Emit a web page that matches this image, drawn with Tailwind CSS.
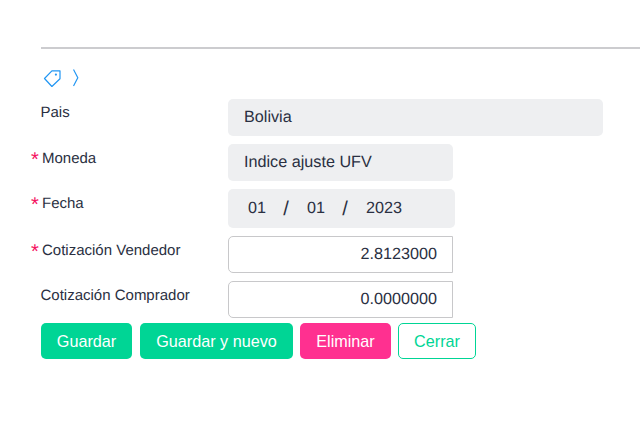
<!DOCTYPE html>
<html lang="es"><head><meta charset="utf-8"><script src="https://cdn.jsdelivr.net/npm/@tailwindcss/browser@4"></script></head>
<body class="bg-white font-['Liberation_Sans',sans-serif] text-[#2a3042] overflow-hidden [text-rendering:geometricPrecision]">
<div class="w-[640px] h-[435px] pl-[41px] pt-[47px]">
  <div class="h-[2px] bg-[#cccccf]"></div>
  <div class="h-[50px] pt-[20px] pl-[2px] flex items-start gap-[11.5px]">
    <svg width="18" height="18" viewBox="0 0 18 18" fill="none" stroke="#2196f3" stroke-width="1.2"><path d="M1.5 10 L8.9 2.3 L17 2.3 L17 10.3 L8.9 18 Z" stroke-linejoin="round" transform="translate(0 -0.5)"/><circle cx="12.9" cy="5.6" r="1.1" fill="#2196f3" stroke="none"/></svg>
    <svg width="6" height="18" viewBox="0 0 6 18" fill="none" stroke="#2196f3" stroke-width="1.2"><path d="M0.5 0.5 L4.8 8.7 L0.5 17"/></svg>
  </div>
  <div class="flex flex-col gap-[8px] w-[562px] text-[16.2px]">
    <div class="flex h-[37px]">
      <label class="w-[187px] shrink-0 text-[15px] leading-[17px] pt-[5px] -ml-[0.5px] mr-[0.5px]">Pais</label>
      <div class="w-[375px] h-[37px] bg-[#eeeff1] rounded-[5px] flex items-center px-[16px]">Bolivia</div>
    </div>
    <div class="flex h-[37px]">
      <label class="w-[197px] shrink-0 -ml-[10px] text-[15px] leading-[17px] pt-[6px] flex"><span class="text-[#f5145f] w-[11px] text-[20px] leading-[20px]">*</span>Moneda</label>
      <div class="w-[225px] h-[37px] bg-[#eeeff1] rounded-[5px] flex items-center px-[16px]">Indice ajuste UFV</div>
    </div>
    <div class="flex h-[39px]">
      <label class="w-[197px] shrink-0 -ml-[10px] text-[15px] leading-[17px] pt-[6px] flex"><span class="text-[#f5145f] w-[11px] text-[20px] leading-[20px]">*</span>Fecha</label>
      <div class="w-[227px] h-[39px] bg-[#eeeff1] rounded-[5px] flex items-center pl-[20px]">
        <span class="w-[18px]">01</span><span class="w-[41px] text-center text-[20px] font-light -translate-x-[0.5px]">/</span><span class="w-[18px]">01</span><span class="w-[41px] text-center text-[20px] font-light -translate-x-[0.5px]">/</span><span>2023</span>
      </div>
    </div>
    <div class="flex h-[37px]">
      <label class="w-[197px] shrink-0 -ml-[10px] text-[15px] leading-[17px] pt-[6px] flex"><span class="text-[#f5145f] w-[11px] text-[20px] leading-[20px]">*</span>Cotización Vendedor</label>
      <div class="w-[225px] h-[37px] bg-white border border-[#c8c8ca] rounded-l-[5px] flex items-center justify-end pr-[15px]">2.8123000</div>
    </div>
    <div class="flex h-[37px]">
      <label class="w-[187px] shrink-0 text-[15px] leading-[17px] pt-[6px] -ml-[0.5px] mr-[0.5px]">Cotización Comprador</label>
      <div class="w-[225px] h-[37px] bg-white border border-[#c8c8ca] rounded-l-[5px] flex items-center justify-end pr-[15px]">0.0000000</div>
    </div>
  </div>
  <div class="flex gap-[7px] mt-[5px] text-[16.2px]">
    <button class="h-[36px] w-[91px] mr-[1px] bg-[#00d595] text-white rounded-[5px]">Guardar</button>
    <button class="h-[36px] w-[153px] bg-[#00d595] text-white rounded-[5px]">Guardar y nuevo</button>
    <button class="h-[36px] w-[91px] bg-[#ff3090] text-white rounded-[5px]">Eliminar</button>
    <button class="h-[36px] w-[78px] bg-white text-[#00d595] border border-[#00d595] rounded-[5px]">Cerrar</button>
  </div>
</div>
</body></html>
